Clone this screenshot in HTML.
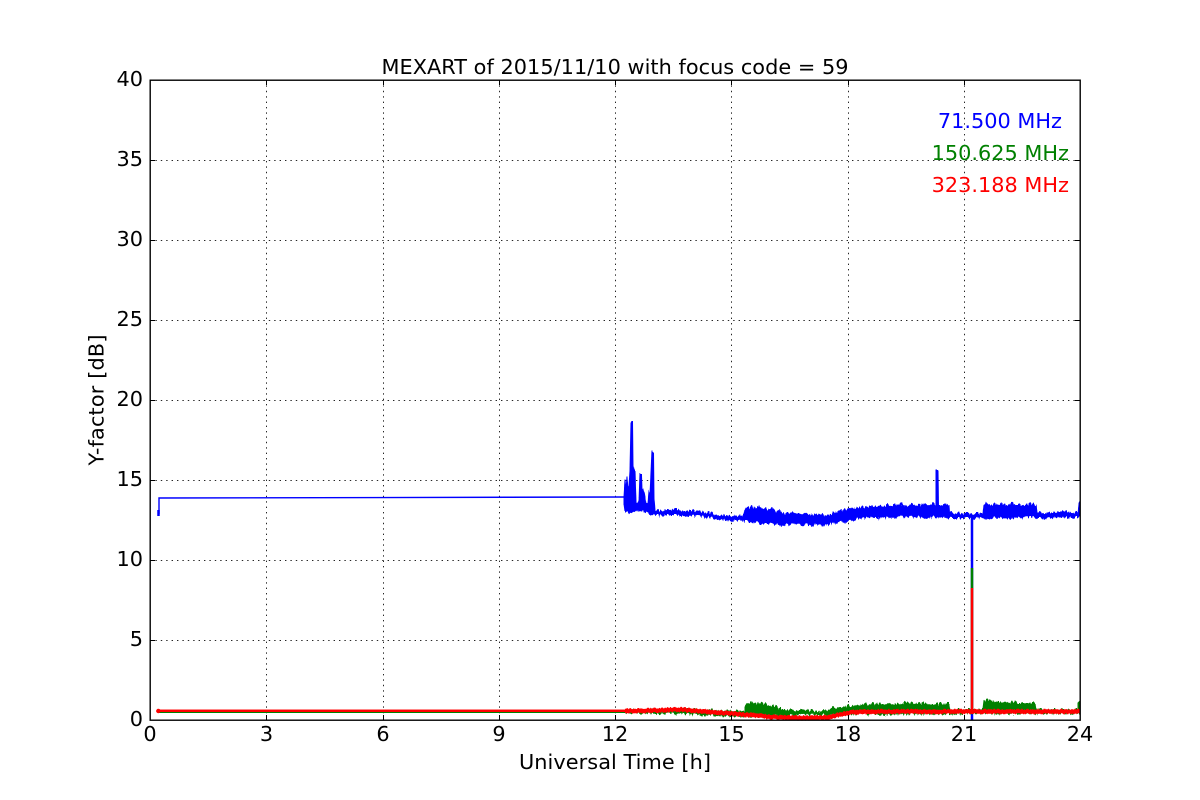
<!DOCTYPE html>
<html><head><meta charset="utf-8"><title>MEXART</title>
<style>html,body{margin:0;padding:0;background:#fff}svg{display:block}text{font-family:"DejaVu Sans","Liberation Sans",sans-serif;font-size:20.83px;fill:#000}</style>
</head><body>
<svg width="1200" height="800" viewBox="0 0 1200 800" xmlns="http://www.w3.org/2000/svg">
<defs>
<filter id="nb" filterUnits="userSpaceOnUse" x="0" y="0" width="1200" height="800" color-interpolation-filters="sRGB">
<feTurbulence type="turbulence" baseFrequency=".28 .02" numOctaves="2" seed="4" result="t"/>
<feColorMatrix in="t" type="matrix" values="0 0 0 0 .5  2 0 0 0 0  0 0 0 0 0  0 0 0 0 1" result="m"/>
<feDisplacementMap in="SourceGraphic" in2="m" scale="3.500" xChannelSelector="R" yChannelSelector="G"/>
</filter>
<filter id="nr" filterUnits="userSpaceOnUse" x="0" y="0" width="1200" height="800" color-interpolation-filters="sRGB">
<feTurbulence type="turbulence" baseFrequency=".3 .02" numOctaves="2" seed="9" result="t"/>
<feColorMatrix in="t" type="matrix" values="0 0 0 0 .5  2 0 0 0 0  0 0 0 0 0  0 0 0 0 1" result="m"/>
<feDisplacementMap in="SourceGraphic" in2="m" scale="1.500" xChannelSelector="R" yChannelSelector="G"/>
</filter>
</defs>
<rect width="1200" height="800" fill="#fff"/>
<g stroke="#000" stroke-width="1" stroke-dasharray="1.4 4" fill="none" opacity=".85">
<path d="M266.500 80V720M383.500 80V720M499.500 80V720M615.500 80V720M731.500 80V720M848.500 80V720M964.500 80V720"/>
<path d="M150 160.500H1080M150 240.500H1080M150 320.500H1080M150 400.500H1080M150 480.500H1080M150 560.500H1080M150 640.500H1080"/>
</g>
<!-- blue -->
<path d="M158.500 510V516" stroke="#00f" stroke-width="2.500" fill="none"/>
<path d="M159 514V498L625 497" stroke="#00f" stroke-width="1.400" fill="none"/>
<path filter="url(#nb)" stroke="#00f" stroke-width="1" fill="#00f" d="M624 497L625 481L626 492L627 478L628 488L629 484L630 470L631 423L632.500 423L633 465L634 470L635 471L636 502L638 503L639 500L640 474L641.500 474L642 490L643 488L644 492L646 503L648 505L649 492L650 494L651 472L652 452L653.500 452L654 500L655 511L660 511L668 510.500L676 510L684 511L692 511L700 512.500L708 513L716 514.500L724 515.500L731 516L738 516.500L744 515.500L745 509L748 508L752 507L756 509L760 507L764 509L768 510L772 509L776 512L780 511L784 514L788 514L792 513L796 515L800 515L804 513L808 515L812 515L816 516L820 514L824 516L828 515L832 514L836 512L840 511L844 510L848 509L852 508L856 508L860 507L864 508L868 507L872 506L876 507L880 506L884 507L888 505L892 506L896 505L900 504L904 505L908 506L912 504L916 505L920 506L924 503L928 505L932 504L936 505L936 470L938 470L938.500 505L942 505L946 504L949 505L949.500 513L956 513.500L964 514L972 514L980 514L983 514L984 506L986 502L988 504L992 505L996 504L1000 505L1004 504L1008 505L1012 503L1016 505L1020 505L1024 506L1028 505L1032 504L1034 505L1036 506L1037 512.500L1044 513L1052 513L1060 512.500L1068 512L1076 513L1078 513L1079 503L1080 503L1080 517L1076 517L1068 517L1060 517.500L1052 517L1044 518L1038 518L1034 517L1028 517L1022 518L1016 517.500L1010 518L1004 517L998 517.500L992 517L986 518L982 517.500L976 518L968 518L960 518L952 518L948 517.500L940 517L932 516.500L924 517L916 516.500L908 517L900 516.500L892 517L884 517.500L876 518L868 517.500L860 518L852 520L846 521L840 522L832 523L826 525L820 524L812 525L804 524L796 525L790 524L782 525L776 524L768 523L760 523L752 521L744 521L738 520L730 520L722 519L714 518L706 517L698 516L690 515.500L682 515L674 515L666 515L660 515L654 515L650 514L646 512L642 509L639 510L636 509L633 512L630 513L628 511L625 511L624 504Z"/>
<path d="M972 516V720" stroke="#00f" stroke-width="2.500" fill="none"/>
<!-- green -->
<path filter="url(#nb)" stroke="#008000" stroke-width="1" fill="#008000" d="M745 706L747 703L750 703L752 702L756 704L760 703L764 704L768 705L772 706L776 707L780 709L784 709L788 710L792 710L796 711L800 711L804 710L808 711L812 711L816 712L820 711L824 711L828 710L832 708L836 708L840 707L844 707L848 706L852 706L856 705L860 705L864 704L868 705L872 704L876 705L880 704L884 704L888 703L892 704L896 704L900 704L904 703L908 702L912 704L916 703L920 704L924 703L928 704L932 704L936 704L940 704L944 704L949 704L950 710L983 710L984 702L987 699L990 700L994 701L998 702L1002 702L1006 702L1010 703L1014 702L1018 703L1022 703L1026 703L1030 703L1035 703L1036 710L1078 710L1078 702L1080 700L1080 713L850 714L745 716L625 712L625 710L700 710L745 711Z"/>
<rect x="159" y="712" width="466" height="1" fill="#008000"/>
<path d="M972 568V714" stroke="#008000" stroke-width="2.500" fill="none"/>
<!-- red -->
<rect x="158" y="710" width="467" height="2" fill="#f00"/>
<rect x="158" y="709" width="467" height="1" fill="#f88"/>
<path filter="url(#nr)" d="M625 711L650 710.500L680 709.500L700 711L731 713.500L755 715.500L780 717.500L800 718L825 717.500L838 715L852 712L880 711.500L920 711.500L972 711.500L1080 711.500" stroke="#f00" stroke-width="4.400" fill="none"/>
<path d="M972 588V714" stroke="#f00" stroke-width="2.500" fill="none"/>
<circle cx="158.300" cy="711" r="2.200" fill="#f00"/>
<!-- ticks -->
<g stroke="#000" stroke-width="1" fill="none">
<path d="M266.500 80v5M383.500 80v5M499.500 80v5M615.500 80v5M731.500 80v5M848.500 80v5M964.500 80v5M266.500 720v-5M383.500 720v-5M499.500 720v-5M615.500 720v-5M731.500 720v-5M848.500 720v-5M964.500 720v-5"/>
<path d="M150 160.500h5M150 240.500h5M150 320.500h5M150 400.500h5M150 480.500h5M150 560.500h5M150 640.500h5M1080 160.500h-5M1080 240.500h-5M1080 320.500h-5M1080 400.500h-5M1080 480.500h-5M1080 560.500h-5M1080 640.500h-5"/>
</g>
<rect x="150.200" y="80.200" width="930" height="640" fill="none" stroke="#000" stroke-width="1.400"/>
<!-- text -->
<g text-anchor="end">
<text x="143" y="86">40</text><text x="143" y="166">35</text><text x="143" y="246">30</text><text x="143" y="326">25</text><text x="143" y="406">20</text><text x="143" y="486">15</text><text x="143" y="566">10</text><text x="143" y="646">5</text><text x="143" y="726">0</text>
</g>
<g text-anchor="middle">
<text x="150" y="741">0</text><text x="266.500" y="741">3</text><text x="383" y="741">6</text><text x="499" y="741">9</text><text x="615" y="741">12</text><text x="731.500" y="741">15</text><text x="848" y="741">18</text><text x="964" y="741">21</text><text x="1080" y="741">24</text>
<text x="615" y="74" textLength="467">MEXART of 2015/11/10 with focus code = 59</text>
<text x="615" y="769" textLength="192">Universal Time [h]</text>
<text transform="translate(103.500 400) rotate(-90)" textLength="131">Y-factor [dB]</text>
</g>
<g text-anchor="end">
<text x="1062" y="128" style="fill:#00f">71.500 MHz</text>
<text x="1069" y="160" style="fill:#008000">150.625 MHz</text>
<text x="1069" y="192" style="fill:#f00">323.188 MHz</text>
</g>
</svg>
</body></html>
